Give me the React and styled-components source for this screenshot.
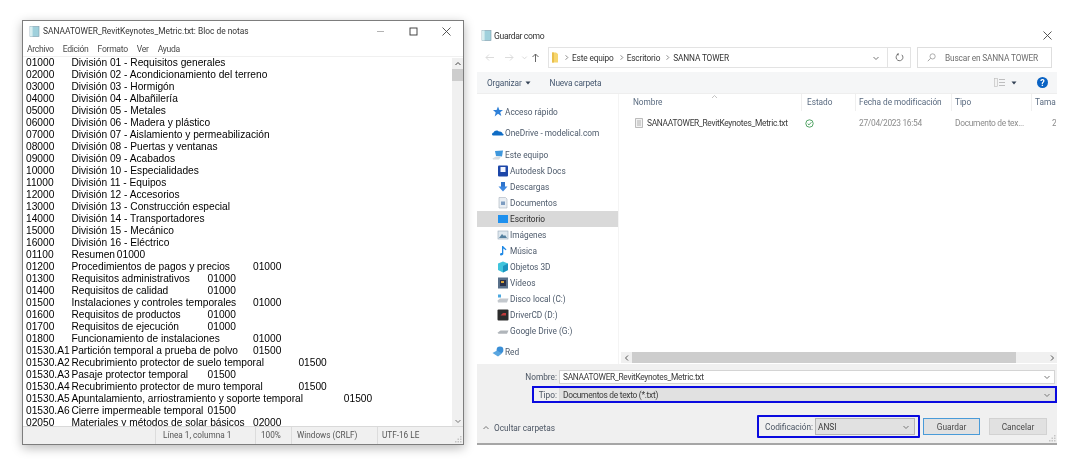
import React from 'react';
import styled, { createGlobalStyle } from 'styled-components';

const GlobalStyle = createGlobalStyle`
    html, body {
        margin: 0;
        padding: 0;
        background: #FFFFFF;
    }
`;

const Page = styled.div`
    display: flex;
    align-items: flex-start;
    width: 1074px;
    height: 470px;
    padding: 20px 0 0 22px;
    box-sizing: border-box;
    overflow: hidden;
    background: #FFFFFF;
    font-family: Roboto, "Noto Sans", sans-serif;
    filter: blur(0.4px);
`;

/* ---------- notepad ---------- */

const Notepad = styled.div`
    display: flex;
    flex-direction: column;
    width: 442px;
    height: 425px;
    box-sizing: border-box;
    border: 1px solid #7d7d7d;
    background: #FFFFFF;
    box-shadow: 0 3px 10px rgba(0, 0, 0, 0.28);
`;

const NoteTitleBar = styled.div`
    display: flex;
    align-items: center;
    height: 20px;
    padding-left: 6px;
    font-size: 8.4px;
    color: #333333;
`;

const NoteTitle = styled.span`
    margin-left: 3px;
    flex: 1;
`;

const WindowButton = styled.span`
    display: flex;
    align-items: center;
    justify-content: center;
    width: 33px;
    height: 20px;
`;

const NoteMenu = styled.div`
    display: flex;
    gap: 9px;
    height: 14px;
    padding: 1px 0 0 4px;
    border-bottom: 1px solid #f0f0f0;
    font-size: 8.6px;
    letter-spacing: -0.3px;
    line-height: 14px;
    color: #4a4a4a;
`;

const NoteBody = styled.div`
    display: flex;
    flex: 1;
    min-height: 0;
`;

const NoteText = styled.pre`
    flex: 1;
    margin: 0;
    padding: 0 0 0 3px;
    overflow: hidden;
    font-family: "Liberation Sans", Arial, sans-serif;
    font-size: 10.2px;
    line-height: 12px;
    color: #000000;
    tab-size: 45.4px;
`;

const VScroll = styled.div`
    display: flex;
    flex-direction: column;
    align-items: center;
    width: 11px;
    margin-top: 1px;
    background: #f0f0f0;
`;

const ScrollArrow = styled.div`
    display: flex;
    align-items: center;
    justify-content: center;
    flex-shrink: 0;
    width: 11px;
    height: 11px;
`;

const VThumb = styled.div`
    width: 100%;
    height: 12px;
    background: #cdcdcd;
`;

const VSpacer = styled.div`
    flex: 1;
`;

const StatusBar = styled.div`
    position: relative;
    display: flex;
    height: 17px;
    flex-shrink: 0;
    border-top: 1px solid #d9d9d9;
    background: #f0f0f0;
    font-size: 8.2px;
    line-height: 16px;
    color: #555555;
`;

const StatusCell = styled.div`
    width: ${p => p.$w}px;
    flex-shrink: 0;
    box-sizing: border-box;
    padding-left: ${p => p.$pad || 0}px;
    border-right: ${p => (p.$last ? 'none' : '1px solid #dcdcdc')};
`;

const Grip = styled.svg`
    position: absolute;
    right: 1px;
    bottom: 1px;
`;

/* ---------- save dialog ---------- */

const Dialog = styled.div`
    display: flex;
    flex-direction: column;
    width: 580px;
    height: 425px;
    margin-left: 13px;
    overflow: hidden;
    background: #FFFFFF;
    font-size: 8.3px;
    color: #4b4b4b;
`;

const DialogTitle = styled.div`
    display: flex;
    align-items: center;
    height: 27px;
    padding: 4px 5px 0 4px;
    box-sizing: border-box;
    font-size: 8.6px;
    letter-spacing: -0.35px;
    color: #333333;
`;

const DialogTitleText = styled.span`
    flex: 1;
    margin-left: 2px;
`;

const NavBar = styled.div`
    display: flex;
    align-items: center;
    height: 21px;
    padding-left: 2px;
    margin-bottom: 4px;
    font-size: 8.3px;
    letter-spacing: -0.15px;
`;

const NavButton = styled.span`
    display: flex;
    align-items: center;
    justify-content: center;
    width: ${p => p.$w}px;
`;

const AddressBox = styled.div`
    display: flex;
    align-items: center;
    width: 363px;
    height: 21px;
    box-sizing: border-box;
    margin-left: 7px;
    padding-left: 2px;
    border: 1px solid #e3e3e3;
    color: #333333;
`;

const Crumb = styled.span`
    margin-left: 2px;
`;

const CrumbSep = styled.span`
    display: inline-flex;
    margin-left: 4px;
`;

const AddressEnd = styled.div`
    display: flex;
    align-items: center;
    justify-content: center;
    width: ${p => p.$w}px;
    height: 100%;
    margin-left: ${p => (p.$auto ? 'auto' : '0')};
    border-left: ${p => (p.$line ? '1px solid #e3e3e3' : 'none')};
`;

const SearchBox = styled.div`
    display: flex;
    align-items: center;
    width: 135px;
    height: 21px;
    box-sizing: border-box;
    margin-left: 6px;
    padding-left: 9px;
    gap: 9px;
    border: 1px solid #dedede;
    color: #6d6d6d;
`;

const Toolbar = styled.div`
    display: flex;
    align-items: center;
    height: 21px;
    padding-left: 10px;
    background: #f5f6f7;
    color: #44566e;
    border-bottom: 1px solid #eeeeee;
    font-size: 8.3px;
    letter-spacing: -0.12px;
`;

const ToolItem = styled.span`
    display: flex;
    align-items: center;
    gap: 3px;
    margin-right: 19px;
`;

const ToolEnd = styled.div`
    display: flex;
    align-items: center;
    gap: 6px;
    margin-left: auto;
    margin-right: 9px;
`;

const HelpDot = styled.span`
    display: flex;
    align-items: center;
    justify-content: center;
    width: 11px;
    height: 11px;
    margin-left: 14px;
    border-radius: 50%;
    background: #0a63c4;
    color: #FFFFFF;
    font-size: 9px;
    font-weight: 700;
`;

const Body = styled.div`
    display: flex;
    flex: 1;
    min-height: 0;
`;

const Sidebar = styled.div`
    width: 142px;
    flex-shrink: 0;
    padding-top: 10px;
    box-sizing: border-box;
    border-right: 1px solid #f4f4f4;
    color: #4d5a6b;
`;

const NavRow = styled.div`
    display: flex;
    align-items: center;
    height: 16px;
    margin-top: ${p => p.$top || 0}px;
    padding-left: ${p => (p.$child ? 20 : 15)}px;
    background: ${p => (p.$selected ? '#d9d9d9' : 'transparent')};
    color: ${p => (p.$selected ? '#2d2d2d' : 'inherit')};
`;

const NavIcon = styled.span`
    display: flex;
    align-items: center;
    justify-content: center;
    flex-shrink: 0;
    width: 12px;
    margin-right: 1px;
`;

const Main = styled.div`
    display: flex;
    flex-direction: column;
    flex: 1;
    min-width: 0;
    margin-left: 1px;
`;

const FileGrid = styled.div`
    display: grid;
    grid-template-columns: 182px 54px 96px 80px 24px;
`;

const HeaderCell = styled.div`
    position: relative;
    height: 17px;
    line-height: 16px;
    padding-left: ${p => p.$pad || 3}px;
    border-right: ${p => (p.$last ? 'none' : '1px solid #efefef')};
    color: #5a6b80;
    white-space: nowrap;
    overflow: hidden;
    letter-spacing: -0.05px;
`;

const SortCaret = styled.svg`
    position: absolute;
    left: 91px;
    top: 0;
`;

const FileRow = styled(FileGrid)`
    margin-top: 4px;
    height: 16px;
    line-height: 16px;
    font-size: 8.4px;
    letter-spacing: -0.29px;
`;

const FileName = styled.div`
    display: flex;
    align-items: center;
    gap: 4px;
    padding-left: 15px;
    color: #3a3a3a;
    white-space: nowrap;
`;

const FileCell = styled.div`
    display: flex;
    align-items: center;
    padding-left: ${p => p.$pad || 3}px;
    color: #8c8c8c;
    white-space: nowrap;
    overflow: hidden;
`;

const ListFill = styled.div`
    flex: 1;
`;

const HScroll = styled.div`
    display: flex;
    align-items: center;
    height: 11px;
    margin-bottom: 1px;
    margin-left: 1px;
    background: #f0f0f0;
`;

const HThumb = styled.div`
    width: 384px;
    height: 100%;
    background: #cdcdcd;
`;

const Footer = styled.div`
    position: relative;
    display: flex;
    flex-direction: column;
    flex-shrink: 0;
    height: 81px;
    box-sizing: border-box;
    padding-top: 6px;
    background: #f0f0f0;
    border-bottom: 2px solid #a6a6a6;
    color: #4b5563;
`;

const FieldRow = styled.div`
    display: flex;
    align-items: center;
    height: ${p => p.$h}px;
    margin-left: ${p => (p.$marked ? 55 : 35)}px;
    margin-top: ${p => p.$top || 0}px;
    box-sizing: border-box;
    border: ${p => (p.$marked ? '2px solid #0a0adf' : 'none')};
    padding-right: ${p => (p.$marked ? 0 : 2)}px;
`;

const FieldLabel = styled.label`
    width: ${p => p.$w}px;
    flex-shrink: 0;
    text-align: right;
    margin-right: 2px;
`;

const FieldBox = styled.div`
    display: flex;
    align-items: center;
    flex: 1;
    height: 100%;
    padding: 0 3px;
    box-sizing: border-box;
    border: 1px solid ${p => (p.$plain ? '#d4d4d4' : '#dcdcdc')};
    background: ${p => (p.$plain ? '#FFFFFF' : '#e1e1e1')};
    color: #3a3a3a;
    font-size: 8.4px;
    letter-spacing: -0.29px;
`;

const FieldChevron = styled.span`
    display: flex;
    margin-left: auto;
`;

const BottomRow = styled.div`
    display: flex;
    align-items: center;
    margin-top: 12px;
    height: 23px;
    padding: 0 10px 0 5px;
`;

const ToggleFolders = styled.div`
    display: flex;
    align-items: center;
    gap: 4px;
    margin-top: 3px;
    margin-right: auto;
`;

const EncodingBox = styled.div`
    display: flex;
    align-items: center;
    width: 163px;
    height: 23px;
    box-sizing: border-box;
    padding: 0 3px 0 6px;
    border: 2px solid #0a0adf;
    border-radius: 1px;
`;

const EncodingLabel = styled.span`
    margin-right: 2px;
`;

const EncodingSelect = styled.div`
    display: flex;
    align-items: center;
    flex: 1;
    height: 15px;
    padding: 0 4px 0 2px;
    border: 1px solid #b5b5b5;
    background: #e1e1e1;
    color: #3a3a3a;
`;

const DialogButton = styled.button`
    width: ${p => p.$w}px;
    height: 17px;
    margin-left: ${p => p.$left}px;
    padding: 0;
    box-sizing: border-box;
    border: 1px solid ${p => (p.$primary ? '#4a9bd8' : '#d2d2d2')};
    background: #e1e1e1;
    color: #4a4a4a;
    font: inherit;
`;

/* ---------- drawn icons ---------- */

const NotepadIcon = () => (
    <svg width="11" height="11" viewBox="0 0 11 11">
        <rect x="1" y="0.5" width="9" height="10" fill="#9fd0dc" stroke="#7a9aa8" strokeWidth="0.6" />
        <rect x="1" y="0.5" width="2.6" height="10" fill="#d8eef0" />
    </svg>
);

const Chevron = ({ dir = 'down', color = '#777777', size = 8 }) => {
    const points = {
        down: '1.5,3 4,5.5 6.5,3',
        up: '1.5,5 4,2.5 6.5,5',
        left: '5,1.5 2.5,4 5,6.5',
        right: '3,1.5 5.5,4 3,6.5',
    };
    return (
        <svg width={size} height={size} viewBox="0 0 8 8">
            <polyline points={points[dir]} fill="none" stroke={color} strokeWidth="1" />
        </svg>
    );
};

const CloseIcon = () => (
    <svg width="9" height="9" viewBox="0 0 9 9">
        <path d="M0.5 0.5 L8.5 8.5 M8.5 0.5 L0.5 8.5" stroke="#444444" strokeWidth="0.9" />
    </svg>
);

const Arrow = ({ dir, color }) => {
    const d = {
        left: 'M9 4.5H1M4 1.5L1 4.5L4 7.5',
        right: 'M0 4.5H8M5 1.5L8 4.5L5 7.5',
        up: 'M4.5 9V1M1.5 4L4.5 1L7.5 4',
    };
    return (
        <svg width="9" height="10" viewBox="0 0 9 10">
            <path d={d[dir]} fill="none" stroke={color} strokeWidth="1" />
        </svg>
    );
};

const FolderIcon = ({ color = '#f6d66f' }) => (
    <svg width="8" height="11" viewBox="0 0 8 11">
        <path d="M1 0.5H5L7 2V10.5H1Z" fill={color} />
        <rect x="1" y="0.5" width="2" height="10" fill="#e9bf4c" />
    </svg>
);

const RefreshIcon = () => (
    <svg width="9" height="9" viewBox="0 0 9 9">
        <path d="M6.8 1.8A3.4 3.4 0 1 1 3 1.3" fill="none" stroke="#666666" strokeWidth="0.9" />
        <path d="M3.6 0 L3.6 2.6 L1.4 1.2Z" fill="#666666" />
    </svg>
);

const SearchIcon = () => (
    <svg width="9" height="9" viewBox="0 0 9 9">
        <circle cx="5.6" cy="3.4" r="2.6" fill="none" stroke="#999999" strokeWidth="0.8" />
        <path d="M3.6 5.3L0.8 8.2" stroke="#999999" strokeWidth="0.9" />
    </svg>
);

const ViewIcon = () => (
    <svg width="11" height="9" viewBox="0 0 11 9">
        <rect x="0.5" y="0.5" width="3" height="8" fill="#f3f3f3" stroke="#b9b9b9" strokeWidth="0.6" />
        <path d="M5 1.5H11M5 4.5H11M5 7.5H11" stroke="#b0b0b0" strokeWidth="0.8" />
    </svg>
);

const SmallCaret = () => (
    <svg width="6" height="4" viewBox="0 0 6 4">
        <path d="M0.5 0.5H5.5L3 3.5Z" fill="#334155" />
    </svg>
);

const PageIconSvg = styled.svg`
    flex-shrink: 0;
`;

const PageIcon = () => (
    <PageIconSvg width="8" height="10" viewBox="0 0 8 10">
        <path d="M0.5 0.5H7.5V9.5H0.5Z" fill="#f2f2f2" stroke="#a0a0a0" strokeWidth="0.7" />
        <path d="M2 3H6M2 5H6M2 7H6" stroke="#9a9a9a" strokeWidth="0.7" />
    </PageIconSvg>
);

const SyncedIcon = () => (
    <svg width="9" height="9" viewBox="0 0 9 9">
        <circle cx="4.5" cy="4.5" r="3.7" fill="none" stroke="#3f9a55" strokeWidth="0.9" />
        <path d="M2.7 4.6L4 5.9L6.4 3.2" fill="none" stroke="#3f9a55" strokeWidth="0.9" />
    </svg>
);

const sidebarIcons = {
    star: <path d="M6 0.5L7.4 4H11L8.2 6.3L9.3 10L6 7.8L2.7 10.5L3.7 6.6L1 4H4.6Z" fill="#2f80d8" />,
    cloud: <path d="M1 8.5C-0.5 8.5 -0.3 5.8 1.6 5.6C2.2 3.2 5.6 2.6 7 4.6C9 4 10.6 5.6 10.4 6.6C12 6.8 12 8.5 10.5 8.5Z" fill="#0f6cc4" />,
    pc: (
        <>
            <path d="M3 2L11 1.5L10 7.5L4 7Z" fill="#3f97dc" />
            <path d="M0.5 9.5L4 7.5H9L7 10.5H1Z" fill="#d8dde2" />
        </>
    ),
    autodesk: (
        <>
            <rect x="1" y="0.5" width="10" height="11" rx="1" fill="#1c46a8" />
            <rect x="3.5" y="2" width="5" height="5" fill="#f2f5ff" />
        </>
    ),
    download: (
        <>
            <rect x="4" y="1" width="4" height="5" fill="#2f74cc" />
            <path d="M1.5 5.5H10.5L6 10.5Z" fill="#3c87e0" />
        </>
    ),
    docs: (
        <>
            <path d="M2 0.5H8.5L10 2V11H2Z" fill="#e9eef3" stroke="#a9b2bc" strokeWidth="0.6" />
            <rect x="4" y="4.5" width="4" height="3.5" fill="#7d9cc0" />
        </>
    ),
    desktop: <rect x="1" y="2" width="10" height="8" fill="#1e90ee" />,
    images: (
        <>
            <rect x="1" y="2" width="10" height="8" fill="#dfe8ef" stroke="#98a8b8" strokeWidth="0.6" />
            <path d="M2 9L5 5L7 7L8 6L10 9Z" fill="#55809f" />
        </>
    ),
    music: <path d="M5 1H6L9.5 4.5L8.8 5.2L6.3 3.6V9C6.3 10.4 3 11.2 3 9.4C3 8.2 4.3 7.8 5 8Z" fill="#1e88e5" />,
    cube: (
        <>
            <path d="M6 0.5L11 2.5V9L6 11.5L1 9V2.5Z" fill="#3fc4dc" />
            <path d="M6 5V11.5L11 9V2.5Z" fill="#1b93bf" />
        </>
    ),
    videos: (
        <>
            <rect x="1" y="0.5" width="10" height="11" fill="#59708a" />
            <rect x="3" y="3" width="6" height="6" fill="#27304a" />
            <rect x="4" y="4" width="3" height="2" fill="#d8a33a" />
        </>
    ),
    disk: (
        <>
            <path d="M0.5 7.5L3 5.5H11.5L10 9.5H1Z" fill="#c3c8cd" />
            <rect x="1" y="1.5" width="3" height="3" fill="#4aa7e0" />
        </>
    ),
    driver: (
        <>
            <rect x="0.5" y="0.5" width="11" height="11" rx="1" fill="#2c2c2c" />
            <path d="M3.5 6.5L6 4H9V6.5Z" fill="#c23b3b" />
        </>
    ),
    drive: <path d="M0.5 7.8L3.5 5.5H11.5L10 8.8H1.5Z" fill="#b0b5ba" />,
    network: (
        <>
            <circle cx="8" cy="4" r="3.4" fill="#3b8fd6" />
            <path d="M0.5 7L5 4.5L10 7.5L6 10.5Z" fill="#5aa6e0" />
        </>
    ),
};

const SidebarIcon = ({ name }) => (
    <svg width="12" height="12" viewBox="0 0 12 12">{sidebarIcons[name]}</svg>
);

/* ---------- data ---------- */

const noteLines = [
    '01000\tDivisión 01 - Requisitos generales',
    '02000\tDivisión 02 - Acondicionamiento del terreno',
    '03000\tDivisión 03 - Hormigón',
    '04000\tDivisión 04 - Albañilería',
    '05000\tDivisión 05 - Metales',
    '06000\tDivisión 06 - Madera y plástico',
    '07000\tDivisión 07 - Aislamiento y permeabilización',
    '08000\tDivisión 08 - Puertas y ventanas',
    '09000\tDivisión 09 - Acabados',
    '10000\tDivisión 10 - Especialidades',
    '11000\tDivisión 11 - Equipos',
    '12000\tDivisión 12 - Accesorios',
    '13000\tDivisión 13 - Construcción especial',
    '14000\tDivisión 14 - Transportadores',
    '15000\tDivisión 15 - Mecánico',
    '16000\tDivisión 16 - Eléctrico',
    '01100\tResumen\t01000',
    '01200\tProcedimientos de pagos y precios\t01000',
    '01300\tRequisitos administrativos\t01000',
    '01400\tRequisitos de calidad\t01000',
    '01500\tInstalaciones y controles temporales\t01000',
    '01600\tRequisitos de productos\t01000',
    '01700\tRequisitos de ejecución\t01000',
    '01800\tFuncionamiento de instalaciones\t01000',
    '01530.A1\tPartición temporal a prueba de polvo\t01500',
    '01530.A2\tRecubrimiento protector de suelo temporal\t01500',
    '01530.A3\tPasaje protector temporal\t01500',
    '01530.A4\tRecubrimiento protector de muro temporal\t01500',
    '01530.A5\tApuntalamiento, arriostramiento y soporte temporal\t01500',
    '01530.A6\tCierre impermeable temporal\t01500',
    '02050\tMateriales y métodos de solar básicos\t02000',
];

const navRows = [
    { icon: 'star', label: 'Acceso rápido' },
    { icon: 'cloud', label: 'OneDrive - modelical.com', top: 5 },
    { icon: 'pc', label: 'Este equipo', top: 6 },
    { icon: 'autodesk', label: 'Autodesk Docs', child: true },
    { icon: 'download', label: 'Descargas', child: true },
    { icon: 'docs', label: 'Documentos', child: true },
    { icon: 'desktop', label: 'Escritorio', child: true, selected: true },
    { icon: 'images', label: 'Imágenes', child: true },
    { icon: 'music', label: 'Música', child: true },
    { icon: 'cube', label: 'Objetos 3D', child: true },
    { icon: 'videos', label: 'Vídeos', child: true },
    { icon: 'disk', label: 'Disco local (C:)', child: true },
    { icon: 'driver', label: 'DriverCD (D:)', child: true },
    { icon: 'drive', label: 'Google Drive (G:)', child: true },
    { icon: 'network', label: 'Red', top: 5 },
];

const FILE_NAME = 'SANAATOWER_RevitKeynotes_Metric.txt';

const App = () => (
    <>
        <GlobalStyle />
        <Page>
            <Notepad>
                <NoteTitleBar>
                    <NotepadIcon />
                    <NoteTitle>{FILE_NAME}: Bloc de notas</NoteTitle>
                    <WindowButton>
                        <svg width="9" height="9" viewBox="0 0 9 9">
                            <path d="M1 4.5H8" stroke="#aaaaaa" strokeWidth="0.9" />
                        </svg>
                    </WindowButton>
                    <WindowButton>
                        <svg width="9" height="9" viewBox="0 0 9 9">
                            <rect x="1" y="1" width="7" height="7" fill="none" stroke="#333333" strokeWidth="0.9" />
                        </svg>
                    </WindowButton>
                    <WindowButton>
                        <CloseIcon />
                    </WindowButton>
                </NoteTitleBar>
                <NoteMenu>
                    <span>Archivo</span>
                    <span>Edición</span>
                    <span>Formato</span>
                    <span>Ver</span>
                    <span>Ayuda</span>
                </NoteMenu>
                <NoteBody>
                    <NoteText>{noteLines.join('\n')}</NoteText>
                    <VScroll>
                        <ScrollArrow>
                            <Chevron dir="up" color="#444444" />
                        </ScrollArrow>
                        <VThumb />
                        <VSpacer />
                        <ScrollArrow>
                            <Chevron dir="down" />
                        </ScrollArrow>
                    </VScroll>
                </NoteBody>
                <StatusBar>
                    <StatusCell $w={133} />
                    <StatusCell $w={100} $pad={7}>Línea 1, columna 1</StatusCell>
                    <StatusCell $w={36} $pad={5}>100%</StatusCell>
                    <StatusCell $w={86} $pad={5}>Windows (CRLF)</StatusCell>
                    <StatusCell $w={85} $pad={4} $last>UTF-16 LE</StatusCell>
                    <Grip width="8" height="8" viewBox="0 0 8 8">
                        <path d="M6 1H7.5V2.5H6ZM3.5 3.5H5V5H3.5ZM6 3.5H7.5V5H6ZM1 6H2.5V7.5H1ZM3.5 6H5V7.5H3.5ZM6 6H7.5V7.5H6Z" fill="#c4c4c4" />
                    </Grip>
                </StatusBar>
            </Notepad>

            <Dialog>
                <DialogTitle>
                    <NotepadIcon />
                    <DialogTitleText>Guardar como</DialogTitleText>
                    <CloseIcon />
                </DialogTitle>
                <NavBar>
                    <NavButton $w={20}><Arrow dir="left" color="#dcdcdc" /></NavButton>
                    <NavButton $w={20}><Arrow dir="right" color="#dcdcdc" /></NavButton>
                    <NavButton $w={11}><Chevron color="#d4d4d4" size={7} /></NavButton>
                    <NavButton $w={11}><Arrow dir="up" color="#666666" /></NavButton>
                    <AddressBox>
                        <FolderIcon />
                        <CrumbSep><Chevron dir="right" size={7} /></CrumbSep>
                        <Crumb>Este equipo</Crumb>
                        <CrumbSep><Chevron dir="right" size={7} /></CrumbSep>
                        <Crumb>Escritorio</Crumb>
                        <CrumbSep><Chevron dir="right" size={7} /></CrumbSep>
                        <Crumb>SANNA TOWER</Crumb>
                        <AddressEnd $w={22} $auto><Chevron size={8} /></AddressEnd>
                        <AddressEnd $w={22} $line><RefreshIcon /></AddressEnd>
                    </AddressBox>
                    <SearchBox>
                        <SearchIcon />
                        <span>Buscar en SANNA TOWER</span>
                    </SearchBox>
                </NavBar>
                <Toolbar>
                    <ToolItem>Organizar <SmallCaret /></ToolItem>
                    <ToolItem>Nueva carpeta</ToolItem>
                    <ToolEnd>
                        <ViewIcon />
                        <SmallCaret />
                        <HelpDot>?</HelpDot>
                    </ToolEnd>
                </Toolbar>
                <Body>
                    <Sidebar>
                        {navRows.map(row => (
                            <NavRow key={row.label} $top={row.top} $child={row.child} $selected={row.selected}>
                                <NavIcon><SidebarIcon name={row.icon} /></NavIcon>
                                {row.label}
                            </NavRow>
                        ))}
                    </Sidebar>
                    <Main>
                        <FileGrid>
                            <HeaderCell $pad={13}>
                                Nombre
                                <SortCaret width="7" height="5" viewBox="0 0 7 5">
                                    <polyline points="1,4 3.5,1.5 6,4" fill="none" stroke="#b5b5b5" strokeWidth="0.8" />
                                </SortCaret>
                            </HeaderCell>
                            <HeaderCell $pad={5}>Estado</HeaderCell>
                            <HeaderCell>Fecha de modificación</HeaderCell>
                            <HeaderCell>Tipo</HeaderCell>
                            <HeaderCell $last>Tamaño</HeaderCell>
                        </FileGrid>
                        <FileRow>
                            <FileName><PageIcon />{FILE_NAME}</FileName>
                            <FileCell $pad={3}><SyncedIcon /></FileCell>
                            <FileCell>27/04/2023 16:54</FileCell>
                            <FileCell>Documento de tex...</FileCell>
                            <FileCell $pad={20}>2</FileCell>
                        </FileRow>
                        <ListFill />
                        <HScroll>
                            <ScrollArrow><Chevron dir="left" color="#555555" /></ScrollArrow>
                            <HThumb />
                            <VSpacer />
                            <ScrollArrow><Chevron dir="right" color="#555555" /></ScrollArrow>
                        </HScroll>
                    </Main>
                </Body>
                <Footer>
                    <FieldRow $h={14}>
                        <FieldLabel $w={45}>Nombre:</FieldLabel>
                        <FieldBox $plain>
                            {FILE_NAME}
                            <FieldChevron><Chevron /></FieldChevron>
                        </FieldBox>
                    </FieldRow>
                    <FieldRow $h={17} $top={2} $marked>
                        <FieldLabel $w={23}>Tipo:</FieldLabel>
                        <FieldBox>
                            Documentos de texto (*.txt)
                            <FieldChevron><Chevron /></FieldChevron>
                        </FieldBox>
                    </FieldRow>
                    <BottomRow>
                        <ToggleFolders>
                            <Chevron dir="up" size={8} />
                            Ocultar carpetas
                        </ToggleFolders>
                        <EncodingBox>
                            <EncodingLabel>Codificación:</EncodingLabel>
                            <EncodingSelect>
                                ANSI
                                <FieldChevron><Chevron /></FieldChevron>
                            </EncodingSelect>
                        </EncodingBox>
                        <DialogButton $w={57} $left={3} $primary>Guardar</DialogButton>
                        <DialogButton $w={58} $left={9}>Cancelar</DialogButton>
                    </BottomRow>
                    <Grip width="8" height="8" viewBox="0 0 8 8">
                        <path d="M6 1H7.5V2.5H6ZM3.5 3.5H5V5H3.5ZM6 3.5H7.5V5H6ZM1 6H2.5V7.5H1ZM3.5 6H5V7.5H3.5ZM6 6H7.5V7.5H6Z" fill="#c4c4c4" />
                    </Grip>
                </Footer>
            </Dialog>
        </Page>
    </>
);

export default App;
